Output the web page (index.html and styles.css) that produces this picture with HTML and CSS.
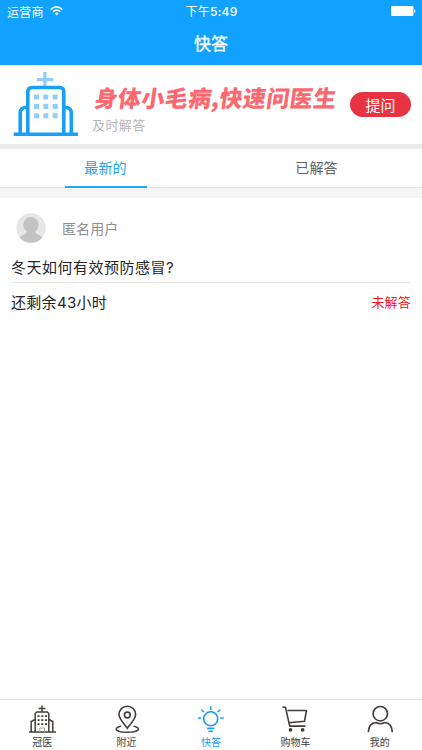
FILE: index.html
```html
<!DOCTYPE html>
<html lang="zh-CN">
<head>
<meta charset="utf-8">
<meta name="viewport" content="width=device-width, initial-scale=1">
<title>快答</title>
<link rel="stylesheet" href="styles.css">
</head>
<body>
<div class="app">
  <header class="header">
    <div class="status">
      <div class="carrier"><span>运营商</span>
        <svg class="wifi" width="13" height="10" viewBox="0 0 13 10"><g fill="none" stroke="#fff" stroke-width="1.5"><path d="M.7 3.5Q6.5-1.7 12.3 3.5"/><path d="M2.8 5.8Q6.5 2.5 10.2 5.8"/></g><path d="M4.4 7.3Q6.5 5.6 8.6 7.3L6.5 9.5Z" fill="#fff"/></svg>
      </div>
      <div class="time">下午<span class="digits">5:49</span></div>
      <svg class="battery" width="25" height="10" viewBox="0 0 25 10" fill="#fff"><rect width="22.4" height="10" rx="1"/><path d="M23 3.2q1.6.2 1.6 1.8T23 6.8Z"/></svg>
    </div>
    <h1 class="title">快答</h1>
  </header>

  <section class="banner">
    <svg class="hospital" width="66" height="66" viewBox="13 71 66 66">
      <path d="M44.900 72v14M37 79.700h16.500" stroke="#91cefb" stroke-width="3.200" fill="none"/>
      <g fill="none" stroke="#199ff6" stroke-width="3.600">
        <path d="M27.800 133V92q0-4.500 4.500-4.500h27q4.500 0 4.500 4.500v41"/>
        <path d="M20.200 133v-20q0-5.800 7-5.800M71.300 133v-20q0-5.800-7-5.800"/>
        <path d="M13.700 134.300h64.200"/>
      </g>
      <g fill="#91cefb"><path d="M34 94.500h5v5h-5zM43.300 94.500h5v5h-5zM52.700 94.500h5v5h-5zM34 104h5v5h-5zM43.300 104h5v5h-5zM52.700 104h5v5h-5zM34 113.300h5v5h-5zM43.300 113.300h5v5h-5zM52.700 113.300h5v5h-5z"/></g>
    </svg>
    <div class="pitch">
      <div class="slogan">身体小毛病<span class="comma">,</span>快速问医生</div>
      <div class="sub">及时解答</div>
    </div>
    <button class="ask">提问</button>
  </section>

  <nav class="tabs">
    <div class="tab"><span class="tab-label active">最新的</span></div>
    <div class="tab"><span class="tab-label">已解答</span></div>
  </nav>

  <main class="feed">
    <article class="post">
      <div class="author">
        <svg width="30" height="30" viewBox="0 0 30 30"><defs><clipPath id="face"><circle cx="15" cy="15" r="14.700"/></clipPath></defs><circle cx="15" cy="15" r="14.700" fill="#e7e7e7"/><g clip-path="url(#face)" fill="#c2c3c4"><path d="M7.300 11.500a7.600 7.600 0 0 1 15.200 0q0 4.700-3.500 7.200 1 2.300 4 3.300 3 1.200 4 3.500V30H3v-4.500q1-2.300 4-3.500 3-1 4-3.300-3.700-2.500-3.700-7.200Z"/></g></svg>
        <span class="name">匿名用户</span>
      </div>
      <p class="question">冬天如何有效预防感冒<span class="digits">?</span></p>
      <div class="meta"><span class="left">还剩余<span class="digits">43</span>小时</span><span class="state">未解答</span></div>
    </article>
  </main>

  <nav class="dock">
    <div class="dock-item">
      <svg width="30" height="29" viewBox="27 705 30 29"><g fill="none" stroke="#453e3c" stroke-width="1.500"><path d="M42 705.500v6M38.500 708.500h7M35.200 732v-18.500l1.500-1.500h10.600l1.500 1.500V732M35 719.500l-3.800 2V732M49 719.500l3.800 2V732M29 732h27"/><path d="M37.500 716.200h9.500M37.500 720.200h9.500M37.500 724.200h9.500" stroke-width="1.700" stroke-dasharray="2.100 1.600"/><path d="M39.700 732v-4h4.800v4" stroke="#aaa6a4" stroke-width="1"/></g></svg>
      <span>冠医</span>
    </div>
    <div class="dock-item">
      <svg width="30" height="29" viewBox="112 705 30 29"><g fill="none" stroke="#453e3c" stroke-width="1.600"><path d="M127.300 728.200c-4.200-5.500-8.300-9.500-8.300-13.700a8.300 8.300 0 0 1 16.600 0c0 4.200-4.100 8.200-8.300 13.700Z"/><circle cx="127.300" cy="715" r="2.900"/><path d="M120.500 726.200c-3 .8-4.300 1.700-4.300 2.900 0 1.900 4.900 3.200 11.100 3.200s11.100-1.300 11.100-3.200c0-1.200-1.300-2.100-4.300-2.900" stroke-linecap="round"/></g></svg>
      <span>附近</span>
    </div>
    <div class="dock-item current">
      <svg width="30" height="29" viewBox="196 705 30 29"><g fill="none" stroke="#189df3" stroke-width="1.600"><circle cx="210.700" cy="718.800" r="7"/><path d="M210.700 706.300v3.500M201.400 709.700l2.300 2.300M220 709.700l-2.300 2.300M197.900 718h3.300M220.200 718h3.500M207.100 728.400h7.200M208.500 731.200h4.400"/></g></svg>
      <span>快答</span>
    </div>
    <div class="dock-item">
      <svg width="30" height="29" viewBox="280 705 30 29"><g fill="none" stroke="#453e3c" stroke-width="1.600" stroke-linejoin="round"><path d="M282.500 707.300h3l4.200 18.800h15.700M287.500 710.500h19l-2 10.800-15.400 1.500"/></g><g fill="#453e3c"><circle cx="290.500" cy="729.800" r="1.900"/><circle cx="302.600" cy="729.800" r="1.900"/></g></svg>
      <span>购物车</span>
    </div>
    <div class="dock-item">
      <svg width="30" height="29" viewBox="364 705 30 29"><g fill="none" stroke="#453e3c" stroke-width="1.600"><ellipse cx="379.300" cy="713.700" rx="7.200" ry="7.200"/><path d="M367.300 732.200c.3-5.600 3.200-9.400 7.700-9.700q4.300 2.500 8.600 0c4.500.3 7.400 4.100 7.700 9.700"/></g></svg>
      <span>我的</span>
    </div>
  </nav>
</div>
</body>
</html>
```
FILE: styles.css
```css
* { box-sizing: border-box; }
body { margin: 0; font-family: "Noto Sans CJK SC", sans-serif; color: #252628; background: #fff; }
svg { display: block; flex: none; }
.app { display: flex; flex-direction: column; height: 750px; overflow: hidden; }
.digits { font-family: Inter, sans-serif; }

.header { height: 65px; background: #11a2ff; color: #fff; flex: none; }
.status { display: grid; grid-template-columns: 1fr auto 1fr; align-items: center; height: 21px; padding: 0 6px 0 7px; font-size: 12px; line-height: 21px; }
.carrier { display: flex; align-items: center; gap: 6px; letter-spacing: .3px; }
.time { letter-spacing: .25px; }
.time .digits { font-weight: 500; }
.battery { justify-self: end; }
.title { margin: 0; font-size: 17px; line-height: 43px; font-weight: 400; -webkit-text-stroke: .3px #fff; text-align: center; }

.banner { display: flex; height: 79px; padding: 6px 10px 0 13px; flex: none; }
.pitch { width: 258px; padding-left: 16px; white-space: nowrap; }
.slogan { margin-top: 11px; height: 30px; line-height: 30px; font-size: 23px; font-weight: 900; color: #fb6970; letter-spacing: .4px; transform: skewX(-8deg); }
.comma { display: inline-block; width: 8px; }
.sub { margin: 2px 0 0 -3px; font-size: 13px; line-height: 22px; letter-spacing: .4px; color: #b5b5b5; }
.ask { margin: 21px 0 0 13px; width: 61px; height: 25px; padding: 0; border: 0; border-radius: 13px; background: #e83442; color: #fff; font: 15px/24px "Noto Sans CJK SC", sans-serif; }

.tabs { display: flex; height: 44px; border-top: 5px solid #ebebeb; border-bottom: 1px solid #e2e2e2; flex: none; }
.tab { flex: 1; display: flex; justify-content: center; }
.tab-label { width: 82px; height: 38px; line-height: 36px; text-align: center; font-size: 14px; letter-spacing: .2px; color: #616264; }
.tab-label.active { height: 39px; color: #26a1ef; border-bottom: 2px solid #23a5f5; }

.feed { flex: 1; border-top: 10px solid #f5f5f5; background: #fff; }
.post { padding: 15px 11px 0; }
.author { display: flex; align-items: center; gap: 16px; height: 30px; padding-left: 5px; font-size: 14px; color: #8e8e8e; }
.name { margin-top: -1px; letter-spacing: .1px; }
.question { margin: 9px 0 0; height: 31px; line-height: 30px; font-size: 15px; letter-spacing: .5px; border-bottom: 1px solid #e5e5e5; }
.meta { display: flex; justify-content: space-between; line-height: 38px; font-size: 15px; letter-spacing: .3px; }
.state { color: #ee1218; font-size: 13px; letter-spacing: .2px; }

.dock { display: flex; height: 51px; border-top: 1px solid #dfdfdf; flex: none; }
.dock-item { flex: 1; padding-top: 5px; display: flex; flex-direction: column; align-items: center; font-size: 10px; line-height: 16px; color: #403b3a; }
.dock-item.current { color: #189df3; }
```
